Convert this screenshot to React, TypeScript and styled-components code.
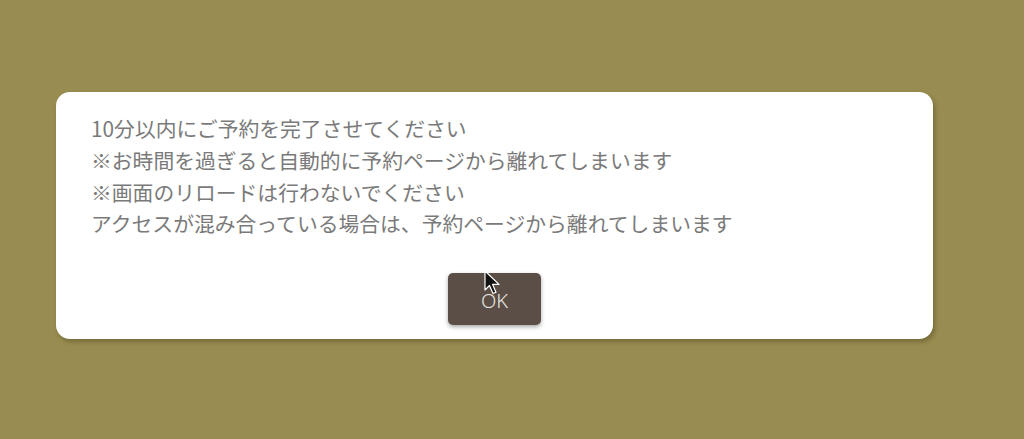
import React from "react";
import styled, { createGlobalStyle } from "styled-components";

const Global = createGlobalStyle`
  html, body { margin: 0; padding: 0; }
  body {
    background: #988c50;
    font-family: "Noto Sans CJK JP", "Noto Sans", sans-serif;
    width: 1024px;
    height: 439px;
    overflow: hidden;
  }
`;

const Page = styled.div`
  padding: 92px 91px 0 56px;
  position: relative;
`;

const Card = styled.div`
  background: #ffffff;
  border-radius: 14px;
  box-shadow: 2px 3px 4px rgba(60, 50, 20, 0.35);
  padding: 21px 35px 14px 35px;
  display: flex;
  flex-direction: column;
`;

const Message = styled.div`
  color: #7a7a7a;
  font-size: 20.8px;
  line-height: 31.8px;
  letter-spacing: 0;
`;

const Line = styled.p`
  margin: 0;
`;

const Actions = styled.div`
  display: flex;
  justify-content: center;
  margin-top: 33px;
`;

const OkButton = styled.button`
  width: 93px;
  height: 52px;
  border: none;
  border-radius: 5px;
  background: #5b4e46;
  color: #e8e4e0;
  font-family: "Noto Sans", "Noto Sans CJK JP", sans-serif;
  font-weight: 300;
  font-size: 20px;
  padding: 0;
  padding-top: 2px;
  box-shadow: 0 2px 4px rgba(0, 0, 0, 0.35);
  position: relative;
`;

const Cursor = styled.svg`
  position: absolute;
  left: 36px;
  top: -3px;
  width: 18px;
  height: 26px;
`;

export default function App() {
  return (
    <>
      <Global />
      <Page>
        <Card>
          <Message>
            <Line>10分以内にご予約を完了させてください</Line>
            <Line>※お時間を過ぎると自動的に予約ページから離れてしまいます</Line>
            <Line>※画面のリロードは行わないでください</Line>
            <Line>アクセスが混み合っている場合は、予約ページから離れてしまいます</Line>
          </Message>
          <Actions>
            <OkButton>
              OK
              <Cursor viewBox="0 0 18 26">
                <path
                  d="M1 1 L1 20 L5.5 15.5 L9 23.5 L12 22.2 L8.6 14.4 L15 14.4 Z"
                  fill="#111"
                  stroke="#fff"
                  strokeWidth="1.2"
                  strokeLinejoin="round"
                />
              </Cursor>
            </OkButton>
          </Actions>
        </Card>
      </Page>
    </>
  );
}
